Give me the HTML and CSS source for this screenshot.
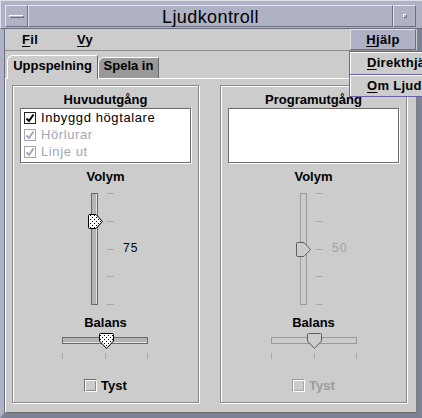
FILE: index.html
```html
<!DOCTYPE html>
<html lang="sv">
<head>
  <meta charset="UTF-8" />
  <title>Ljudkontroll</title>
  <link rel="stylesheet" href="styles.css">
</head>
<body>
  <div class="window">
    <div class="titlebar">
      <div class="tb-btn"><span class="tb-bar"></span></div>
      <div class="title">Ljudkontroll</div>
      <div class="tb-btn"><span class="tb-dot"></span></div>
    </div>
    <div class="frame">
      <div class="menubar">
        <span class="menu"><u>F</u>il</span>
        <span class="menu"><u>V</u>y</span>
        <span class="menu menu-open"><u>H</u>jälp</span>
      </div>
      <div class="tabs">
        <div class="tab tab-active">Uppspelning</div>
        <div class="tab">Spela in</div>
      </div>
      <div class="tab-body">
        <!-- Huvudutgång -->
        <section class="group">
          <div class="group-title">Huvudutgång</div>
          <div class="list">
            <div class="item">
              <span class="cb"><svg viewBox="0 0 10 10"><path d="M1.5 5.5 L4 8 L8.5 1.5"/></svg></span>
              Inbyggd högtalare
            </div>
            <div class="item disabled">
              <span class="cb"><svg viewBox="0 0 10 10"><path d="M1.5 5.5 L4 8 L8.5 1.5"/></svg></span>
              Hörlurar
            </div>
            <div class="item disabled">
              <span class="cb"><svg viewBox="0 0 10 10"><path d="M1.5 5.5 L4 8 L8.5 1.5"/></svg></span>
              Linje ut
            </div>
          </div>
          <div class="label">Volym</div>
          <svg class="vslider" width="185" height="122" viewBox="0 0 185 122">
            <defs>
              <pattern id="dots" width="4" height="4" patternUnits="userSpaceOnUse">
                <rect x="1" y="1" width="1" height="1" fill="#000"/>
                <rect x="3" y="3" width="1" height="1" fill="#000"/>
              </pattern>
            </defs>
            <rect x="78.5" y="7.5" width="6" height="111" fill="#b4b4b4" stroke="#6a6a6a"/>
            <line x1="83.5" y1="8" x2="83.5" y2="118" stroke="#e0e0e0"/>
            <g stroke="#a8a8a8">
              <line x1="94" y1="7.5" x2="101" y2="7.5"/>
              <line x1="94" y1="35.5" x2="101" y2="35.5"/>
              <line x1="94" y1="63.5" x2="101" y2="63.5"/>
              <line x1="94" y1="90.5" x2="101" y2="90.5"/>
              <line x1="94" y1="118.5" x2="101" y2="118.5"/>
            </g>
            <path d="M76.5 28.5 H83 L89.5 35.5 L83 42.5 H76.5 Q75.5 42.5 75.5 41.5 V29.5 Q75.5 28.5 76.5 28.5 Z" fill="#fff"/>
            <path d="M76.5 28.5 H83 L89.5 35.5 L83 42.5 H76.5 Q75.5 42.5 75.5 41.5 V29.5 Q75.5 28.5 76.5 28.5 Z" fill="url(#dots)" stroke="#000"/>
            <text x="110" y="66" class="value">75</text>
          </svg>
          <div class="label label-balans">Balans</div>
          <svg class="hslider" width="185" height="30" viewBox="0 0 185 30">
            <rect x="49.5" y="5.5" width="85" height="6" fill="#b4b4b4" stroke="#6a6a6a"/>
            <line x1="50" y1="10.5" x2="134" y2="10.5" stroke="#e0e0e0"/>
            <g stroke="#a8a8a8">
              <line x1="49.5" y1="21" x2="49.5" y2="27"/>
              <line x1="92.5" y1="21" x2="92.5" y2="27"/>
              <line x1="134.5" y1="21" x2="134.5" y2="27"/>
            </g>
            <path d="M87.5 1.5 H99.5 Q100.5 1.5 100.5 2.5 V9 L93.5 16.5 L86.5 9 V2.5 Q86.5 1.5 87.5 1.5 Z" fill="#fff"/>
            <path d="M87.5 1.5 H99.5 Q100.5 1.5 100.5 2.5 V9 L93.5 16.5 L86.5 9 V2.5 Q86.5 1.5 87.5 1.5 Z" fill="url(#dots)" stroke="#000"/>
          </svg>
          <div class="mute">
            <span class="mute-box"></span>
            <span>Tyst</span>
          </div>
        </section>

        <!-- Programutgång -->
        <section class="group group-disabled">
          <div class="group-title">Programutgång</div>
          <div class="list"></div>
          <div class="label">Volym</div>
          <svg class="vslider" width="185" height="122" viewBox="0 0 185 122">
            <rect x="79.5" y="7.5" width="6" height="111" fill="#cccccc" stroke="#9a9a9a"/>
            <g stroke="#a8a8a8">
              <line x1="95" y1="7.5" x2="102" y2="7.5"/>
              <line x1="95" y1="35.5" x2="102" y2="35.5"/>
              <line x1="95" y1="63.5" x2="102" y2="63.5"/>
              <line x1="95" y1="90.5" x2="102" y2="90.5"/>
              <line x1="95" y1="118.5" x2="102" y2="118.5"/>
            </g>
            <path d="M76.5 56.5 H83 L89.5 63.5 L83 70.5 H76.5 Q75.5 70.5 75.5 69.5 V57.5 Q75.5 56.5 76.5 56.5 Z" fill="#cccccc" stroke="#5e5e5e"/>
            <text x="111" y="66" class="value value-off">50</text>
          </svg>
          <div class="label label-balans">Balans</div>
          <svg class="hslider" width="185" height="30" viewBox="0 0 185 30">
            <rect x="50.5" y="5.5" width="85" height="6" fill="#cccccc" stroke="#9a9a9a"/>
            <g stroke="#a8a8a8">
              <line x1="50.5" y1="21" x2="50.5" y2="27"/>
              <line x1="93.5" y1="21" x2="93.5" y2="27"/>
              <line x1="135.5" y1="21" x2="135.5" y2="27"/>
            </g>
            <path d="M87.5 1.5 H99.5 Q100.5 1.5 100.5 2.5 V9 L93.5 16.5 L86.5 9 V2.5 Q86.5 1.5 87.5 1.5 Z" fill="#cccccc" stroke="#5e5e5e"/>
          </svg>
          <div class="mute">
            <span class="mute-box"></span>
            <span>Tyst</span>
          </div>
        </section>
      </div>
    </div>

    <div class="popup">
      <div class="popup-item"><u>D</u>irekthjälp</div>
      <div class="popup-item popup-sep"><u>O</u>m Ljudkontroll</div>
    </div>
  </div>
</body>
</html>
```

FILE: styles.css
```css
* {
  box-sizing: border-box;
}
html, body {
  margin: 0;
  overflow: hidden;
}
body {
  background: #cccccc;
  font-family: 'Liberation Sans', Arial, sans-serif;
  color: #000;
}
u {
  text-decoration: underline;
  text-underline-offset: 2px;
}
.window {
  position: relative;
  width: 422px;
  height: 418px;
  display: flex;
  flex-direction: column;
  overflow: hidden;
}

/* title bar */
.titlebar {
  display: flex;
  height: 29px;
  padding: 4px 6px 1px 4px;
  background: #aeb2c4;
  border-top: 1px solid #dfe1ea;
  border-left: 1px solid #dfe1ea;
  border-bottom: 1px solid #6c7080;
}
.tb-btn {
  width: 23px;
  border: 1px solid;
  border-color: #e2e4ec #6c7080 #6c7080 #e2e4ec;
  display: flex;
  align-items: center;
  justify-content: center;
}
.tb-bar {
  width: 15px;
  height: 3px;
  border: 1px solid;
  border-color: #fff #6c7080 #6c7080 #fff;
}
.tb-dot {
  width: 4px;
  height: 4px;
  border: 1px solid;
  border-color: #fff #6c7080 #6c7080 #fff;
}
.title {
  flex: 1;
  text-align: center;
  font-size: 18px;
  line-height: 22px;
  letter-spacing: 0.4px;
  border-left: 1px solid #e2e4ec;
  border-right: 1px solid #6c7080;
  border-top: 1px solid #e2e4ec;
  border-bottom: 1px solid #6c7080;
}

/* frame */
.frame {
  flex: 1;
  display: flex;
  flex-direction: column;
  border-left: 4px solid #aeb2c4;
  border-right: 5px solid #7e8296;
  border-bottom: 5px solid #7e8296;
  padding-left: 1px;
  background: linear-gradient(#6c7080, #6c7080) 0 0 / 1px 100% no-repeat, #cccccc;
}

/* menu bar */
.menubar {
  display: flex;
  height: 22px;
  padding-left: 17px;
  gap: 39px;
  border-bottom: 1px solid #8c8c8c;
}
.menu {
  font-weight: bold;
  font-size: 13px;
  line-height: 21px;
  letter-spacing: 0.3px;
}
.menu-open {
  margin-left: auto;
  margin-right: 1px;
  width: 66px;
  text-align: center;
  line-height: 19px;
  background: #aeb2c4;
  border: 1px solid;
  border-color: #e2e4ec #6c7080 #6c7080 #e2e4ec;
}

/* tabs */
.tabs {
  display: flex;
  align-items: flex-end;
  height: 27px;
  padding-left: 2px;
}
.tab {
  font-weight: bold;
  font-size: 13px;
  text-align: center;
  border-top: 1px solid #fff;
  border-left: 1px solid #fff;
  border-right: 1px solid #6a6a6a;
  border-top-left-radius: 6px;
}
.tab-active {
  position: relative;
  z-index: 1;
  width: 91px;
  height: 24px;
  margin-bottom: -1px;
  line-height: 19px;
  background: #cccccc;
}
.tab:not(.tab-active) {
  width: 61px;
  height: 21px;
  line-height: 16px;
  background: #999999;
}

/* tab body */
.tab-body {
  flex: 1;
  display: flex;
  gap: 21px;
  padding: 6px 7px 0 6px;
  border: 1px solid;
  border-color: #fff #7c7c7c #6a6a6a #fff;
}
.group {
  width: 187px;
  height: 318px;
  border: 1px solid #8a8a8a;
  box-shadow: inset 1px 1px 0 #fff, 1px 1px 0 #fff;
  display: flex;
  flex-direction: column;
}
.group-title,
.label {
  font-weight: bold;
  font-size: 13px;
  line-height: 16px;
  text-align: center;
}
.group-title {
  margin-top: 6px;
}
.list {
  margin: 0 7px;
  height: 55px;
  padding-bottom: 2px;
  background: #fff;
  border: 1px solid #6e6e6e;
  box-shadow: 1px 1px 0 #fff;
}
.item {
  display: flex;
  align-items: center;
  gap: 5px;
  height: 17px;
  padding-left: 3px;
  font-size: 13px;
  letter-spacing: 0.6px;
}
.item.disabled {
  color: #a2a6b8;
}
.cb {
  width: 12px;
  height: 12px;
  border: 1px solid #222;
  background: #fff;
  display: flex;
}
.cb svg {
  width: 10px;
  height: 10px;
  fill: none;
  stroke: #000;
  stroke-width: 2;
}
.item.disabled .cb {
  border-color: #a2a6b8;
}
.item.disabled .cb svg {
  stroke: #a2a6b8;
}
.label {
  margin-top: 6px;
}
.label-balans {
  margin-top: 7px;
}
.vslider,
.hslider {
  display: block;
  margin-top: 1px;
}
.value {
  font-family: 'Liberation Sans', Arial, sans-serif;
  font-size: 12px;
  letter-spacing: 1px;
  fill: #000;
}
.value-off {
  fill: #a0a0a0;
}
.mute {
  margin-top: 15px;
  display: flex;
  justify-content: center;
  align-items: center;
  gap: 4px;
  height: 16px;
  font-weight: bold;
  font-size: 13px;
}
.mute-box {
  width: 13px;
  height: 13px;
  border: 1px solid;
  border-color: #6e6e6e #fff #fff #6e6e6e;
  box-shadow: inset 1px 1px 0 #fff, inset -1px -1px 0 #8a8a8a;
}
.group-disabled .mute {
  color: #9c9c9c;
}
.group-disabled .mute-box {
  border-color: #9c9c9c #fff #fff #9c9c9c;
  box-shadow: inset 1px 1px 0 #fff, inset -1px -1px 0 #a8a8a8;
}

/* open menu */
.popup {
  position: absolute;
  left: 349px;
  top: 51px;
  width: 100px;
  border: 1px solid #6a62a8;
  background: #cccccc;
  box-shadow: inset 1px 1px 0 #fff;
}
.popup-item {
  height: 22px;
  padding-left: 17px;
  font-weight: bold;
  font-size: 13px;
  line-height: 22px;
  letter-spacing: 0.3px;
  white-space: nowrap;
}
.popup-sep {
  border-top: 1px solid #6a62a8;
  box-shadow: inset 0 1px 0 #fff;
}
```
